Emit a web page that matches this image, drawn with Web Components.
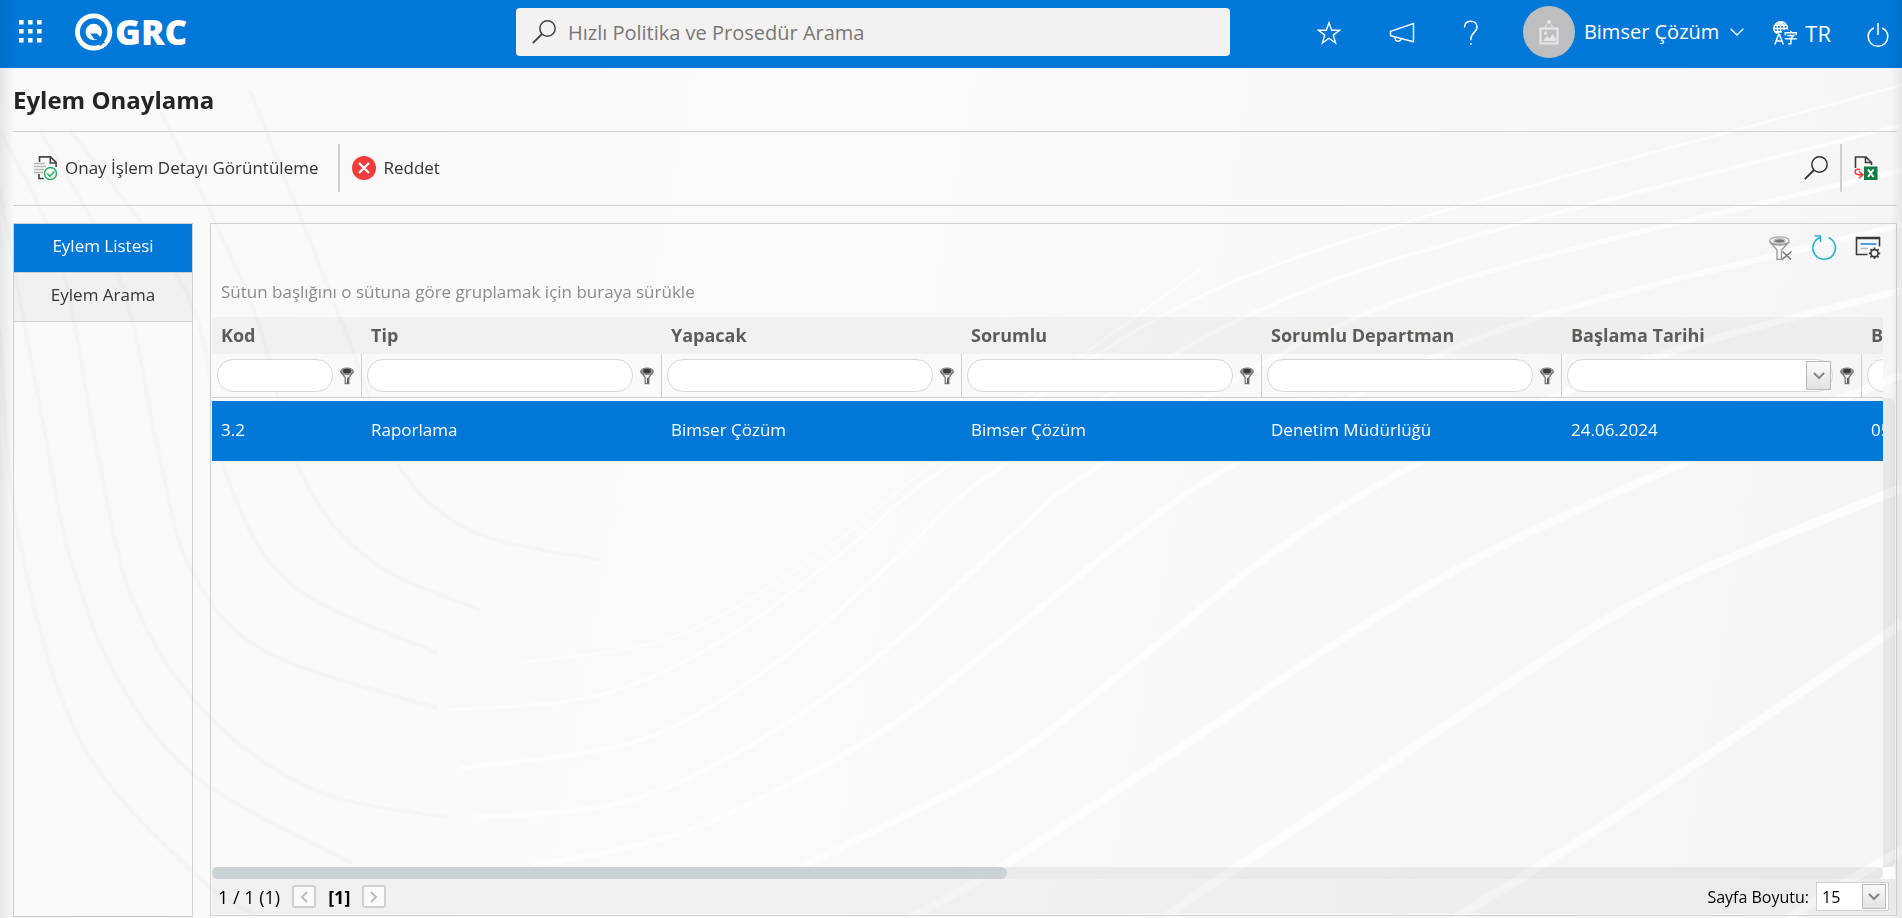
<!DOCTYPE html>
<html lang="tr">
<head>
<meta charset="utf-8">
<title>Eylem Onaylama</title>
<style>
  html, body { height: 100%; }
  body { margin: 0; overflow: hidden; font: 17px/24px "Open Sans", "Noto Sans", sans-serif; color: #333; background: #f9f9f9; }
</style>
</head>
<body>
<grc-app></grc-app>
<script>
const define = (name, html, setup) => {
  const template = document.createElement('template');
  template.innerHTML = html;
  customElements.define(name, class extends HTMLElement {
    connectedCallback() {
      if (this.shadowRoot) return;
      const root = this.attachShadow({ mode: 'open' });
      root.append(template.content.cloneNode(true));
      if (setup) setup(this, root);
    }
  });
};

/* ---------- icons ---------- */
const ICONS = {
  apps: [24, 24, '<path fill="#fff" stroke="none" d="M0 0h4.600v4.600H0zM9 0h4.600v4.600H9zM18 0h4.600v4.600H18zM0 9h4.600v4.600H0zM9 9h4.600v4.600H9zM18 9h4.600v4.600H18zM0 18h4.600v4.600H0zM9 18h4.600v4.600H9zM18 18h4.600v4.600H18z"/>'],
  logo: [38, 38, '<circle cx="18.700" cy="19" r="16.200" fill="none" stroke="#fff" stroke-width="4.800"/><circle cx="18.700" cy="19" r="8.200" fill="#fff" stroke="none"/><path d="M15.500 20.500h6.500l8 9-3 3-5-6.500-2.500.5z" fill="#0078d7" stroke="none"/><path d="M24 30.500h7v2.500l-5 1.500z" fill="#fff" stroke="none"/><path d="M22 26.500l4.500 5.500" stroke="#0078d7" stroke-width="3"/>'],
  glass: [24, 24, '<circle cx="15.500" cy="8.500" r="7.700"/><path d="M10 14L.8 23.200" stroke-width="1.900"/>'],
  star: [24, 24, '<path d="M12 1.800l2.700 7.500h7.800l-6.200 4.800 2.300 7.900-6.600-4.700L5.400 22l2.300-7.900L1.500 9.300h7.800z" stroke-width="1.400"/>'],
  megaphone: [26, 24, '<path d="M1.500 10.300L24.500 2.500v18.300L1.500 14.800zM6 16c0 3 1 4.300 3 4.300s3-1.300 3-2.700" stroke-width="1.400"/>'],
  help: [16, 26, '<path d="M1.500 7.500C1.500 3.600 4 1.300 7.700 1.300s6.400 2.300 6.400 5.900c0 5-6.300 5.200-6.300 12v1" stroke-width="1.500"/><path d="M7 23h1.700v1.800H7z" fill="currentColor" stroke="none"/>'],
  photo: [22, 26, '<g stroke="#e4e6e8"><rect x="2.500" y="9.500" width="17" height="15" stroke-width="2.200"/><path d="M7 8.500l2-3M15 8.500l-2-3" stroke-width="1.300"/></g><circle cx="11" cy="3" r="2" fill="#e4e6e8" stroke="none"/><path d="M5 22l4-5 2.500 2.500L14.500 15l3.500 4.500V22zM6 12.500h3v3H6z" fill="#e4e6e8" stroke="none"/>'],
  chevron: [14, 8, '<path d="M.7 .7L7 7l6.300-6.300" stroke-width="1.300"/>'],
  language: [24, 24, '<g stroke-width="1.500"><path d="M4.500 12.500C2 11.500.9 9.500.9 7.500a6.800 6.800 0 0 1 13.600 0v1M1 7.500h13.400M2 4.200h11.400M2.500 10.800H9M7.700.8C3 4 3.500 9 6 12.500M7.700.8c3 2.200 3.800 5 3.300 8.200M7.700.8v11"/><path d="M1.800 23.500L5.700 13.500h.8l3.800 10M3 20h6.200"/><path d="M12.300 14.200v-2.400h11v2.400M17.800 11.500V9.700M14.300 14.500h6.300l-2.800 2.700M11.800 17.700h12M17.900 17.500v5.300h-2.800"/></g>'],
  power: [22, 26, '<path d="M6.800 6C3.300 7.700 1.200 10.800 1.200 14.500a9.800 9.800 0 0 0 19.600 0C20.800 10.800 18.700 7.700 15.200 6M11 1v12" stroke-width="1.500"/>'],
  approve: [24, 24, '<path d="M5.500 6V.9h11l5.600 5.500v4.500M16.300 1v6H22M5 18v4.500h4.500" stroke="#444" stroke-width="1.600"/><path d="M0 7.500h11M0 10.500h12M0 13.500h10M0 16.500h9" stroke="#b9b9b9" stroke-width="1.300"/><circle cx="16.500" cy="17.500" r="6" stroke="#27ae60" stroke-width="1.500" fill="#fafafa"/><path d="M13.300 17.500l2.600 2.700 4.500-4.700" stroke="#27ae60" stroke-width="1.500"/>'],
  reject: [24, 24, '<circle cx="12" cy="12" r="12" fill="#f03c3c" stroke="none"/><path d="M7 7l10 10M17 7L7 17" stroke="#fff" stroke-width="2.300"/>'],
  excel: [24, 24, '<path d="M1.500 12V1H12l5.500 5.500V9M11.500 1v5.500H17" stroke="#3a3a3a" stroke-width="1.600"/><path d="M6 13.500c-3.500-1-5 .7-5 2.500 0 2 2 3 7 3M5 15.500l4 3.300-4 3.500" stroke="#e8363d" stroke-width="1.500"/><path d="M10 10.500h13.500V24H10z" fill="#107c41" stroke="none"/><path d="M14 13.500l5.500 7.500M19.500 13.500L14 21" stroke="#fff" stroke-width="2"/>'],
  clear: [24, 24, '<ellipse cx="10.500" cy="4.800" rx="9.700" ry="4" fill="#f4f4f4" stroke="#aaa" stroke-width="1.300"/><path d="M1 6l7 8v9.500h4.500V14l7.500-8c-4 4-15 4-19 0z" fill="#f6f6f6" stroke="#999" stroke-width="1.300"/><ellipse cx="10.500" cy="5" rx="5.500" ry="2.200" fill="#777" stroke="#bbb"/><path d="M13.500 15.500l8.500 8M22.500 15.500l-9.500 8" stroke="#777" stroke-width="1.500"/>'],
  refresh: [26, 26, '<path d="M9 2.400A11.300 11.300 0 1 0 17.500 2.500M3.500 1h6v6" stroke="#27b4cf" stroke-width="1.600"/>'],
  settings: [26, 24, '<path d="M12.500 18.500H1.500v-17h23v9M2 2.500h22" stroke="#3a3a3a" stroke-width="1.600"/><path d="M5.500 8h16" stroke="#2b88d8" stroke-width="1.600"/><path d="M5.500 12.500H13" stroke="#bbb" stroke-width="1.500"/><circle cx="19.500" cy="17.300" r="3.600" stroke="#3a3a3a" stroke-width="1.700"/><path d="M19.500 13.500v-2M19.500 23v-2M15.700 17.300h-1.900M25.200 17.300h-1.900M16.800 14.600l-1.400-1.400M23.600 21.400l-1.400-1.400M16.800 20l-1.400 1.400M23.600 13.200l-1.400 1.400" stroke="#3a3a3a" stroke-width="1.700"/>'],
  funnel: [14, 18, '<path d="M.8 5l4.400 5.500V16.500h3.600V10.500L13.200 5z" fill="#eee" stroke="#777" stroke-width="1.300"/><ellipse cx="7" cy="4.200" rx="6.300" ry="3.200" fill="#999" stroke="#777" stroke-width="1"/><ellipse cx="7" cy="4" rx="4" ry="2.300" fill="#3a3a3a" stroke="none"/><path d="M7.800 11v5.500" stroke="#555" stroke-width="1.500"/>'],
  down: [12, 8, '<path d="M1 1l5 5 5-5" stroke="#888" stroke-width="2.200"/>'],
  left: [8, 12, '<path d="M7 1L2 6l5 5" stroke="#bbb" stroke-width="2"/>'],
  right: [8, 12, '<path d="M1 1l5 5-5 5" stroke="#bbb" stroke-width="2"/>']
};
define('grc-icon', '<style>:host{display:block;flex:none}svg{display:block;fill:none;stroke:currentColor;stroke-width:1.500}</style>', (el, root) => {
  const [w, h, body] = ICONS[el.getAttribute('name')];
  root.innerHTML += `<svg width="${w}" height="${h}" viewBox="0 0 ${w} ${h}" aria-hidden="true">${body}</svg>`;
});

/* ---------- wavy page backdrop ---------- */
define('grc-backdrop', `
<style>
  :host { position: fixed; inset: 0; z-index: -1; background: linear-gradient(100deg, #f9f9f9, #fafafa 45%, #f5f5f5); }
  svg { width: 100%; height: 100%; display: block; fill: none; }
</style>
<svg viewBox="0 0 1902 918" preserveAspectRatio="none" aria-hidden="true"></svg>`, (el, root) => {
  const smooth = p => {
    let d = `M${p[0]}`;
    for (let i = 0; i < p.length - 1; i++) {
      const a = p[i - 1] || p[i], b = p[i], c = p[i + 1], e = p[i + 2] || c;
      d += `C${b[0] + (c[0] - a[0]) / 6},${b[1] + (c[1] - a[1]) / 6} ${c[0] - (e[0] - b[0]) / 6},${c[1] - (e[1] - b[1]) / 6} ${c}`;
    }
    return d;
  };
  const white = [
    [9, [[1902, 850], [1850, 880], [1789, 918]]],
    [9, [[1902, 622], [1882, 637], [1735, 737], [1565, 850], [1455, 918]]],
    [9, [[1902, 488], [1674, 583], [1528, 670], [1371, 777], [1237, 867], [1164, 918]]],
    [8, [[1902, 375], [1686, 462], [1480, 557], [1325, 650], [1177, 750], [1007, 863], [910, 918]]],
    [7, [[1902, 290], [1640, 362], [1419, 463], [1277, 550], [1150, 650], [1000, 765], [800, 867]]],
    [6, [[1902, 225], [1500, 330], [1237, 463], [1128, 537], [1007, 635], [873, 737], [690, 830], [534, 865]]],
    [5, [[1902, 170], [1400, 300], [1104, 463], [1007, 540], [898, 640], [776, 730], [631, 800], [473, 818]]],
    [4, [[1902, 125], [1320, 285], [1007, 463], [898, 557], [776, 663], [640, 740], [461, 768]]],
    [3, [[1902, 85], [1250, 275], [952, 463], [849, 547], [728, 637], [600, 695], [449, 710]]],
    [2, [[1200, 270], [934, 463], [825, 550], [679, 635], [521, 663]]]
  ];
  const grey = [
    [[0, 330], [18, 533], [80, 740], [194, 873], [260, 918]],
    [[0, 190], [48, 450], [73, 567], [120, 683], [200, 780], [352, 863]],
    [[0, 130], [60, 260], [97, 450], [133, 600], [206, 713], [315, 790], [449, 818]],
    [[40, 130], [120, 280], [158, 450], [190, 567], [263, 650], [437, 708]],
    [[70, 130], [190, 300], [225, 470], [290, 583], [437, 653]],
    [[150, 90], [250, 300], [300, 470], [370, 560], [480, 610]],
    [[250, 90], [345, 330], [395, 460], [470, 530], [600, 560]]
  ];
  root.querySelector('svg').innerHTML =
    grey.map(p => `<path d="${smooth(p)}" stroke="#f5f5f5" stroke-width="4"/>`).join('') +
    white.map(([w, p]) => `<path d="${smooth(p)}" stroke="#fff" stroke-opacity=".65" stroke-width="${w}"/>`).join('');
});

/* ---------- header ---------- */
define('grc-header', `
<style>
  :host { display: grid; grid-template-columns: 516fr 714fr 672fr; align-items: center; height: 68px; flex: none; background: #0078d7; color: #fff; font-size: 20px; }
  div, a, button, label { display: flex; align-items: center; }
  button, a { font: inherit; color: inherit; background: none; border: 0; padding: 0; text-decoration: none; }
  .brand { gap: 32px; padding-left: 19px; margin-top: -4px; }
  .logo { gap: 2px; font-size: 35px; font-weight: 800; line-height: 40px; }
  .search { height: 48px; margin-bottom: 4px; padding: 0 16px; gap: 12px; background: #f3f2f1; border-radius: 4px; color: #444; box-sizing: border-box; }
  input { flex: 1; min-width: 0; border: 0; padding: 2px 0 0; background: none; outline: 0; font: inherit; line-height: 28px; }
  input::placeholder { color: #777; opacity: 1; }
  .tools { justify-content: flex-end; padding-right: 13px; margin-top: -2px; }
  .links { gap: 48px; margin-right: 44px; }
  .user { gap: 9px; margin-right: 29px; margin-top: -2px; }
  .user grc-icon { margin-left: 2px; }
  .user .avatar grc-icon { margin: 0; }
  .avatar { width: 52px; height: 52px; border-radius: 50%; background: #bcbec0; justify-content: center; }
  .lang { gap: 8px; margin-right: 36px; font-size: 22px; }
  .power { margin-top: 4px; }
</style>
<div class="brand"><button aria-label="Menü"><grc-icon name="apps"></grc-icon></button>
  <a class="logo" href="#"><grc-icon name="logo"></grc-icon><span>GRC</span></a></div>
<label class="search"><grc-icon name="glass"></grc-icon><input type="search" placeholder="Hızlı Politika ve Prosedür Arama" aria-label="Hızlı Politika ve Prosedür Arama"></label>
<div class="tools">
  <div class="links"><button aria-label="Favoriler"><grc-icon name="star"></grc-icon></button><button aria-label="Duyurular"><grc-icon name="megaphone"></grc-icon></button><button aria-label="Yardım"><grc-icon name="help"></grc-icon></button></div>
  <button class="user"><div class="avatar"><grc-icon name="photo"></grc-icon></div><span>Bimser Çözüm</span><grc-icon name="chevron"></grc-icon></button>
  <button class="lang"><grc-icon name="language"></grc-icon><span>TR</span></button>
  <button class="power" aria-label="Çıkış"><grc-icon name="power"></grc-icon></button>
</div>`);

/* ---------- toolbar ---------- */
define('grc-toolbar', `
<style>
  :host { display: flex; justify-content: space-between; align-items: center; height: 73px; flex: none; border: solid #d0d0d0; border-width: 1px 0; padding: 0 19px 0 21px; }
  div { display: flex; align-items: center; height: 48px; margin-bottom: 2px; }
  ::slotted(button) { display: flex; align-items: center; gap: 7px; height: 48px; padding: 0; border: 0; background: none; font: inherit; color: #333; }
  ::slotted(hr) { width: 2px; height: 48px; margin: 0 12px; border: 0; background: #d0d0d0; }
  ::slotted(hr.wide) { margin-left: 20px; }
</style>
<div><slot></slot></div><div><slot name="end"></slot></div>`);

/* ---------- side tabs ---------- */
define('grc-tabs', `
<style>
  :host { display: block; width: 178px; flex: none; border: 1px solid #d0d0d0; border-bottom-color: #c4c4c4; box-sizing: content-box; }
  ::slotted(a) { display: block; height: 48px; line-height: 44px; text-align: center; text-decoration: none; color: #333; background: rgba(0,0,0,.035); border-bottom: 1px solid #d0d0d0; }
  ::slotted(a[aria-current]) { background: #0078d7; color: #fff; }
</style><slot></slot>`);

/* ---------- column filter field ---------- */
define('grc-filter', `
<style>
  :host { display: flex; align-items: center; gap: 7px; padding: 5px 7px 5px 5px; }
  .field { flex: 1; min-width: 0; height: 33px; display: flex; align-items: center; border: 1px solid #d6d6d6; border-radius: 16px; background: #fff; box-sizing: border-box; }
  input { flex: 1; min-width: 0; border: 0; outline: 0; padding: 0 12px; background: none; font: inherit; }
  button { padding: 0; border: 0; background: none; }
  .drop { display: grid; place-items: center; width: 25px; height: 29px; margin-right: 1px; border: 1px solid #bbb; background: linear-gradient(#fafafa, #e2e2e2); }
</style>
<div class="field"><input type="text"></div><button aria-label="Filtre"><grc-icon name="funnel"></grc-icon></button>`, (el, root) => {
  root.querySelector('input').setAttribute('aria-label', el.getAttribute('label'));
  if (el.hasAttribute('date'))
    root.querySelector('.field').insertAdjacentHTML('beforeend', '<button class="drop" aria-label="Tarih seç"><grc-icon name="down"></grc-icon></button>');
});

/* ---------- data grid ---------- */
define('grc-grid', `
<style>
  :host { display: flex; flex-direction: column; flex: 1; min-width: 0; border: 1px solid #d0d0d0; padding: 0 1px; margin-bottom: 2px; }
  .tools { display: flex; justify-content: flex-end; align-items: center; gap: 18px; height: 24px; padding: 12px 14px 0 0; }
  .tools button { padding: 0; border: 0; background: none; color: inherit; }
  .group { margin: 0; padding: 20px 9px 13px; color: #8c8c8c; }
  .view { flex: 1; min-height: 0; display: grid; grid-template: 1fr 12px / minmax(0, 1fr) 12px; }
  .scroll { overflow: hidden; }
  table { width: 1950px; table-layout: fixed; border-collapse: separate; border-spacing: 0; }
  col { width: 300px; } col:first-child { width: 150px; }
  th, td { padding: 0; text-align: left; white-space: nowrap; }
  .head th { height: 37px; padding: 0 9px 2px; box-sizing: border-box; background: rgba(0,0,0,.035); font-size: 18px; font-weight: 700; color: #5c5c58; line-height: 24px; }
  .filter td { height: 43px; border: solid #d0d0d0; border-width: 0 1px 1px 0; }
  .gap td { height: 3px; }
  .row td { height: 60px; padding: 0 9px 3px; box-sizing: border-box; background: #0078d7; color: #fff; line-height: 24px; }
  .vbar { margin-top: 81px; border-radius: 0 6px 6px 0; background: rgba(0,0,0,.055); }
  .hbar { border-radius: 0 6px 6px 0; background: rgba(0,0,0,.055); }
  .hbar i { display: block; width: 47.6%; height: 12px; border-radius: 6px; background: #cad2d5; }
  .corner { background: #fff; }
  .pager { display: flex; align-items: center; justify-content: space-between; height: 35px; flex: none; padding: 0 6px; background: rgba(0,0,0,.035); color: #000; font-size: 18px; margin-bottom: 1px; }
  .pager div, .pager label { display: flex; align-items: center; gap: 12px; }
  .pager label { gap: 7px; font-size: 16px; }
  .pager .step { display: grid; place-items: center; width: 24px; height: 23px; padding: 0; border: 2px solid #d0d0d0; border-radius: 3px; background: #fafafa; }
  .size { display: grid; grid-template-columns: 1fr 26px; align-items: center; width: 73px; height: 29px; border: 1px solid #d0d0d0; background: #fff; box-sizing: border-box; }
  select { grid-area: 1 / 1 / 2 / 3; appearance: none; width: 100%; height: 27px; border: 0; padding: 0 5px; background: none; font: inherit; color: #000; }
  .arrow { grid-area: 1 / 2; display: grid; place-items: center; width: 24px; height: 25px; box-sizing: border-box; border: 1px solid #bbb; background: linear-gradient(#fafafa, #e2e2e2); pointer-events: none; }
</style>
<div class="tools"><button aria-label="Filtreyi temizle"><grc-icon name="clear"></grc-icon></button><button aria-label="Yenile"><grc-icon name="refresh"></grc-icon></button><button aria-label="Ayarlar"><grc-icon name="settings"></grc-icon></button></div>
<p class="group">Sütun başlığını o sütuna göre gruplamak için buraya sürükle</p>
<div class="view">
  <div class="scroll"><table>
    <colgroup></colgroup>
    <thead><tr class="head"></tr><tr class="filter"></tr></thead>
    <tbody><tr class="gap"><td colspan="7"></td></tr><tr class="row"></tr></tbody>
  </table></div>
  <div class="vbar"></div><div class="hbar"><i></i></div><div class="corner"></div>
</div>
<div class="pager">
  <div><span>1 / 1 (1)</span><button class="step" aria-label="Önceki"><grc-icon name="left"></grc-icon></button><b>[1]</b><button class="step" aria-label="Sonraki"><grc-icon name="right"></grc-icon></button></div>
  <label>Sayfa Boyutu:<span class="size"><select><option>15</option></select><span class="arrow"><grc-icon name="down"></grc-icon></span></span></label>
</div>`, (el, root) => {
  const columns = [['Kod', '3.2'], ['Tip', 'Raporlama'], ['Yapacak', 'Bimser Çözüm'], ['Sorumlu', 'Bimser Çözüm'], ['Sorumlu Departman', 'Denetim Müdürlüğü'], ['Başlama Tarihi', '24.06.2024', 'date'], ['Bitiş Tarihi', '05.07.2024', 'date']];
  const fill = (selector, cell) => root.querySelector(selector).innerHTML = columns.map(cell).join('');
  fill('colgroup', () => '<col>');
  fill('.head', ([label]) => `<th scope="col">${label}</th>`);
  fill('.filter', ([label, , date = '']) => `<td><grc-filter label="${label}" ${date}></grc-filter></td>`);
  fill('.row', ([, value]) => `<td>${value}</td>`);
});

/* ---------- page ---------- */
define('grc-app', `
<style>
  :host { display: flex; flex-direction: column; height: 100vh; }
  main { flex: 1; min-height: 0; display: flex; flex-direction: column; padding: 0 5px 0 13px; }
  h1 { margin: 0; height: 63px; font-size: 24px; line-height: 63px; font-weight: 700; color: #252423; }
  .panes { flex: 1; min-height: 0; display: flex; gap: 17px; padding-top: 17px; }
  grc-tabs { margin-bottom: 1px; }
  .edges { position: fixed; inset: 0; pointer-events: none; background: linear-gradient(90deg, rgba(0,0,0,.08), transparent 14px calc(100% - 12px), rgba(0,0,0,.06)); }
</style>
<grc-backdrop></grc-backdrop>
<grc-header></grc-header>
<main>
  <h1>Eylem Onaylama</h1>
  <grc-toolbar>
    <button><grc-icon name="approve"></grc-icon>Onay İşlem Detayı Görüntüleme</button><hr class="wide"><button><grc-icon name="reject"></grc-icon>Reddet</button>
    <button slot="end" aria-label="Ara"><grc-icon name="glass"></grc-icon></button><hr slot="end"><button slot="end" aria-label="Excel'e aktar"><grc-icon name="excel"></grc-icon></button>
  </grc-toolbar>
  <div class="panes">
    <grc-tabs><a href="#" aria-current="page">Eylem Listesi</a><a href="#">Eylem Arama</a></grc-tabs>
    <grc-grid></grc-grid>
  </div>
</main>
<div class="edges"></div>`);
</script>
</body>
</html>
